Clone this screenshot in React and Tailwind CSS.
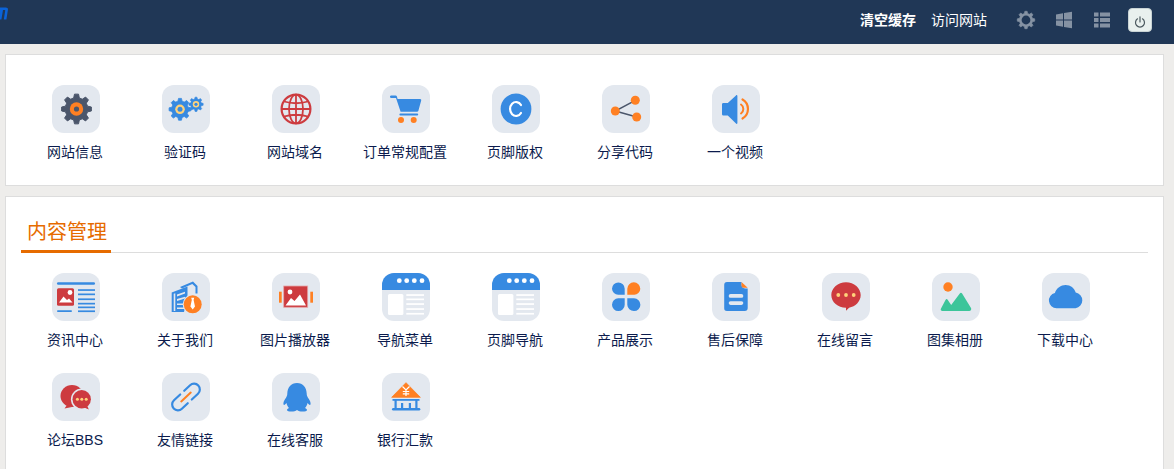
const BLUE = "#378ae1";
const RED = "#cd3b3f";
const ORANGE = "#ff8023";
const SLATE = "#4b566b";
const YELLOW = "#ffd27a";
const TILE = "#e3e8ef";

function gearPath(cx, cy, r, teeth) {
  const inner = r * 0.76;
  const step = (Math.PI * 2) / teeth;
  let d = "";
  for (let i = 0; i < teeth; i++) {
    const a = i * step - Math.PI / 2;
    const pts = [
      [inner, a - step * 0.32],
      [r, a - step * 0.17],
      [r, a + step * 0.17],
      [inner, a + step * 0.32],
    ];
    pts.forEach(([rad, ang], k) => {
      const x = (cx + rad * Math.cos(ang)).toFixed(2);
      const y = (cy + rad * Math.sin(ang)).toFixed(2);
      d += (i === 0 && k === 0 ? "M" : "L") + x + " " + y + " ";
    });
  }
  return d + "Z";
}

const Svg = ({ children }) => (
  <svg viewBox="0 0 48 48" width="48" height="48" className="block">
    {children}
  </svg>
);

const icons = {
  gear: (
    <Svg>
      <path d={gearPath(24.5, 24, 15, 8)} fill={SLATE} stroke={SLATE} strokeWidth="1" strokeLinejoin="round" />
      <circle cx="24.5" cy="24" r="6.7" fill={ORANGE} />
      <circle cx="24.5" cy="24" r="2.6" fill={SLATE} />
    </Svg>
  ),
  gears: (
    <Svg>
      <path d={gearPath(18, 24.3, 11, 8)} fill={BLUE} stroke={BLUE} strokeWidth="0.8" strokeLinejoin="round" />
      <circle cx="18" cy="24.3" r="4.8" fill={YELLOW} />
      <circle cx="18" cy="24.3" r="2.5" fill={BLUE} />
      <path d={gearPath(34, 19.3, 7.2, 8)} fill={BLUE} stroke={BLUE} strokeWidth="0.6" strokeLinejoin="round" />
      <circle cx="34" cy="19.3" r="3.2" fill={YELLOW} />
      <circle cx="34" cy="19.3" r="1.6" fill={BLUE} />
    </Svg>
  ),
  globe: (
    <Svg>
      <g fill="none" stroke={RED} strokeWidth="1.8">
        <circle cx="24" cy="24" r="14.4" strokeWidth="2.2" />
        <ellipse cx="24" cy="24" rx="7" ry="14.4" />
        <path d="M24 9.6V38.4M9.6 24H38.4M12 16.5Q24 20 36 16.5M12 31.5Q24 28 36 31.5" />
      </g>
    </Svg>
  ),
  cart: (
    <Svg>
      <path d="M9 10.5h4.5a1.5 1.5 0 0 1 1.4 1.1L15.6 14H38a1.2 1.2 0 0 1 1.2 1.5L36.4 25.8a1.5 1.5 0 0 1-1.4 1H18.6L14 13H9.5a1.2 1.2 0 0 1-.5-2.5Z" fill={BLUE} />
      <rect x="17.4" y="28.4" width="18.8" height="2.2" rx="1" fill={BLUE} />
      <circle cx="19" cy="35" r="3" fill={ORANGE} />
      <circle cx="31.7" cy="35" r="3" fill={ORANGE} />
    </Svg>
  ),
  copyright: (
    <Svg>
      <circle cx="24" cy="24" r="15.4" fill={BLUE} />
      <path d="M29 20A6 7 0 1 0 29 28" fill="none" stroke="#fff" strokeWidth="2.2" strokeLinecap="round" />
    </Svg>
  ),
  share: (
    <Svg>
      <path d="M33.3 15.3L13.3 26L34.7 32" fill="none" stroke={SLATE} strokeWidth="1.5" />
      <circle cx="33.3" cy="15.3" r="4.5" fill={ORANGE} />
      <circle cx="13.3" cy="26" r="4.5" fill={ORANGE} />
      <circle cx="34.7" cy="32" r="4.5" fill={ORANGE} />
    </Svg>
  ),
  speaker: (
    <Svg>
      <path d="M10 19.5a1.4 1.4 0 0 1 1.4-1.4h4.4L24 10.4c.6-.6 1.4-.2 1.4.6v27c0 .8-.8 1.2-1.4.6l-8.2-8h-4.4a1.4 1.4 0 0 1-1.4-1.4Z" fill={BLUE} />
      <path d="M29 19.5a5.5 5.5 0 0 1 0 9" fill="none" stroke={ORANGE} strokeWidth="2" strokeLinecap="round" />
      <path d="M30.5 14.5a11 11 0 0 1 0 19" fill="none" stroke={ORANGE} strokeWidth="2.2" strokeLinecap="round" />
    </Svg>
  ),
  news: (
    <Svg>
      <rect x="5" y="9.2" width="38" height="2.6" rx="1.2" fill={BLUE} />
      <rect x="5" y="15.3" width="17" height="17.4" rx="1.5" fill={RED} />
      <circle cx="18" cy="19.5" r="2.4" fill="#fff" />
      <path d="M7 29.5l4.5-6 3.5 3.5 2-1.6 3.5 4.1Z" fill="#fff" />
      <rect x="5" y="37.2" width="15" height="1.8" rx="0.9" fill={BLUE} />
      <g fill={BLUE}>
        <rect x="26" y="16.2" width="17" height="1.7" />
        <rect x="26" y="20.5" width="17" height="1.7" />
        <rect x="26" y="25.4" width="17" height="1.7" />
        <rect x="26" y="29.8" width="17" height="1.7" />
        <rect x="26" y="33.5" width="17" height="1.7" />
        <rect x="26" y="37.4" width="17" height="1.7" />
      </g>
    </Svg>
  ),
  about: (
    <Svg>
      <path d="M18 14L31 8.500l4.500 4.500v7.500h-2v-6.500l-3.200-3L20 15.500Z" fill={BLUE} />
      <path d="M9.700 19.500L25.500 13.500V22L22 39H9.700Z" fill={BLUE} />
      <g fill={TILE}>
        <path d="M11.700 20.800L13.300 20.200V38H11.700Z" />
        <path d="M15 21.500L23 18.700V20.500L15 23.500Z" />
        <path d="M15 26L23 23.800V25.500L15 28Z" />
        <path d="M15 30.500H22V32H15Z" />
        <path d="M15 34.500H22V36H15Z" />
      </g>
      <circle cx="30.700" cy="31.300" r="10" fill={TILE} />
      <circle cx="30.700" cy="31.300" r="9" fill={ORANGE} />
      <path d="M29.200 24.800h3l-.6 2.200 1.400 6.600-2.300 3-2.300-3 1.400-6.600Z" fill="#fff" />
    </Svg>
  ),
  player: (
    <Svg>
      <rect x="7" y="18.7" width="2.7" height="11" fill={ORANGE} />
      <rect x="38.3" y="18.7" width="2.7" height="11" fill={ORANGE} />
      <rect x="11.7" y="13" width="24" height="21.3" fill={RED} stroke="#e6a7a8" strokeWidth="0.8" />
      <circle cx="18" cy="19" r="2.4" fill="#fff" />
      <path d="M13.500 32.500l5.500-7.500 3.500 3 5.500-6.500 6 11Z" fill="#fff" />
    </Svg>
  ),
  nav: (
    <Svg>
      <rect x="0" y="0" width="48" height="17" fill={BLUE} />
      <g fill="#fff">
        <circle cx="17.300" cy="7.700" r="2.400" />
        <circle cx="24.700" cy="7.700" r="2.400" />
        <circle cx="32.300" cy="7.700" r="2.400" />
        <circle cx="40" cy="7.700" r="2.400" />
        <rect x="6" y="21" width="15.400" height="21" rx="1.500" />
        <rect x="24.300" y="21.200" width="17.700" height="1.700" />
        <rect x="24.300" y="25.500" width="17.700" height="1.700" />
        <rect x="24.300" y="30.200" width="17.700" height="1.700" />
        <rect x="24.300" y="35.200" width="17.700" height="1.700" />
        <rect x="24.300" y="39.900" width="17.700" height="1.700" />
      </g>
    </Svg>
  ),
  clover: (
    <Svg>
      <path d="M10 15.800a6.300 6.300 0 0 1 12.700 0v5.900H16.300A6.200 6.200 0 0 1 10 15.800Z" fill={BLUE} />
      <path d="M25.300 15.800a6.500 6.500 0 0 1 13 0 6 6 0 0 1-6.300 5.900h-6.700Z" fill={ORANGE} />
      <path d="M10 31.700a6.300 6.300 0 0 1 6.300-6.400h6.400v6.400a6.300 6.300 0 0 1-12.700 0Z" fill={BLUE} />
      <path d="M25.300 25.300h6.700a6.400 6.400 0 0 1 0 12.800 6.600 6.600 0 0 1-6.700-6.400Z" fill={BLUE} />
    </Svg>
  ),
  doc: (
    <Svg>
      <path d="M15 9h14.500v2.500a4 4 0 0 0 3.600 4h2.600V35a3 3 0 0 1-3 3H15a2.800 2.800 0 0 1-2.800-3V12a3 3 0 0 1 2.800-3Z" fill={BLUE} />
      <path d="M29.500 9l6.200 5.700h-4.200a2 2 0 0 1-2-2Z" fill={ORANGE} />
      <rect x="16.700" y="21" width="14.600" height="3.800" rx="1.900" fill={TILE} />
      <rect x="16.700" y="28.300" width="14.600" height="3.600" rx="1.800" fill={TILE} />
    </Svg>
  ),
  message: (
    <Svg>
      <path d="M24 9.200c8.100 0 14.700 5.800 14.700 12.900 0 6.600-5.400 11.600-11.600 12.600L24 37.800v-3C15.900 34.800 9.300 29.200 9.300 22.100S15.900 9.200 24 9.200Z" fill={RED} />
      <circle cx="16.300" cy="22" r="1.900" fill={YELLOW} />
      <circle cx="24" cy="22" r="1.900" fill={YELLOW} />
      <circle cx="31.700" cy="22" r="1.900" fill={YELLOW} />
    </Svg>
  ),
  photo: (
    <Svg>
      <circle cx="16" cy="14" r="4.700" fill={ORANGE} />
      <path d="M9 35.500L13.500 27c.7-1.200 1.600-1.200 2.300 0l3.400 5 8.600-11.500c.7-1 1.600-1 2.300 0L39 35c.7 1.500-.1 3-1.800 3H10.600c-1.600 0-2.400-1-1.600-2.500Z" fill="#3cc59a" />
    </Svg>
  ),
  cloud: (
    <Svg>
      <path d="M14.500 35.200a7.700 7.700 0 0 1-1.600-15.200C14.400 15 18.900 12 23.600 12c4.900 0 8.800 3 10.100 7.600a7.900 7.900 0 0 1-.1 15.600Z" fill={BLUE} />
    </Svg>
  ),
  chat: (
    <Svg>
      <ellipse cx="20" cy="23" rx="11.500" ry="11" fill={RED} />
      <path d="M15 32L12.500 35.500L20 34Z" fill={RED} />
      <circle cx="29.700" cy="26.300" r="10.800" fill={TILE} />
      <circle cx="29.700" cy="26.300" r="9.200" fill={RED} />
      <path d="M31 34L36.800 36.500L34.500 31Z" fill={RED} />
      <circle cx="25.400" cy="26.300" r="1.500" fill={YELLOW} />
      <circle cx="29.800" cy="26.300" r="1.500" fill={YELLOW} />
      <circle cx="34.200" cy="26.300" r="1.500" fill={YELLOW} />
    </Svg>
  ),
  link: (
    <Svg>
      <g transform="translate(24 24) rotate(-43)" fill="none" strokeLinecap="round">
        <path d="M-2.500 -5.800H-11a5.800 5.800 0 0 0 0 11.600H-3" stroke={BLUE} strokeWidth="2.200" />
        <path d="M3 -5.800H11a5.800 5.800 0 0 1 0 11.600H2.500" stroke={BLUE} strokeWidth="2.200" />
        <path d="M-6.500 0H6.500" stroke={ORANGE} strokeWidth="2" />
      </g>
    </Svg>
  ),
  qq: (
    <Svg>
      <path d="M25 10c6 0 9.500 4.500 9.700 10.500 0 2 .6 3.300 1.800 5 1.400 2 2.200 3.700 2.100 5.500-.1 1-.9 1.300-1.600.5l-1.500-1.500c-.4 2.200-1.200 3.800-2.500 5 1.300.6 2 1.300 2 2 0 1.200-2 1.500-4.500 1.500-2.300 0-4-.5-5.500-1.500-1.500 1-3.200 1.500-5.500 1.500-2.500 0-4.500-.3-4.500-1.500 0-.7.700-1.400 2-2-1.300-1.200-2.100-2.800-2.500-5l-1.500 1.500c-.7.800-1.500.5-1.600-.5-.1-1.800.7-3.500 2.100-5.500 1.200-1.700 1.800-3 1.800-5C15.500 14.500 19 10 25 10Z" fill={BLUE} />
    </Svg>
  ),
  bank: (
    <Svg>
      <path d="M24 9.700L38.300 24.300H9.700Z" fill={ORANGE} stroke={ORANGE} strokeWidth="0.8" strokeLinejoin="round" />
      <path d="M20.500 13.500L24 17l3.500-3.500M24 17v6M20.800 18.500h6.400M20.800 20.800h6.400" fill="none" stroke="#fff" strokeWidth="1.200" />
      <g fill={BLUE}>
        <rect x="10.500" y="26" width="27" height="1.800" />
        <rect x="12.500" y="27" width="2.200" height="8" />
        <rect x="19" y="30" width="2.200" height="5" />
        <rect x="26.800" y="30" width="2.200" height="5" />
        <rect x="33.300" y="27" width="2.200" height="8" />
        <rect x="10" y="35" width="28.300" height="2.500" rx="1.200" />
      </g>
    </Svg>
  ),
};

const row1 = [
  ["网站信息", "gear"],
  ["验证码", "gears"],
  ["网站域名", "globe"],
  ["订单常规配置", "cart"],
  ["页脚版权", "copyright"],
  ["分享代码", "share"],
  ["一个视频", "speaker"],
];

const row2 = [
  ["资讯中心", "news"],
  ["关于我们", "about"],
  ["图片播放器", "player"],
  ["导航菜单", "nav"],
  ["页脚导航", "nav"],
  ["产品展示", "clover"],
  ["售后保障", "doc"],
  ["在线留言", "message"],
  ["图集相册", "photo"],
  ["下载中心", "cloud"],
  ["论坛BBS", "chat"],
  ["友情链接", "link"],
  ["在线客服", "qq"],
  ["银行汇款", "bank"],
];

function Item({ label, icon }) {
  return (
    <div className="flex h-[100px] w-[110px] flex-col items-center">
      <div className="h-12 w-12 overflow-hidden rounded-xl bg-[#e3e8ef]">{icons[icon]}</div>
      <div className="mr-[2px] mt-2 whitespace-nowrap text-center text-sm leading-[22px] text-[#0b1b4d]">{label}</div>
    </div>
  );
}

const HeaderIcon = ({ children }) => (
  <svg viewBox="0 0 20 20" width="20" height="20" className="block">
    {children}
  </svg>
);

export default function App() {
  return (
    <div className="h-[469px] overflow-hidden bg-[#eeedeb] [font-family:'Liberation_Sans','Noto_Sans_CJK_SC',sans-serif]">
      <header className="relative flex h-11 items-center justify-end bg-[#203756] pb-1 pr-[22px] text-sm text-white">
        <svg viewBox="0 0 8 14" width="8" height="14" className="absolute left-0 top-[6px]">
          <path d="M0 1.500h5.800c1.700 0 2.400 1 2.100 2.500L6.400 13.500H3.800L5.200 4.800c.1-.5-.1-.7-.6-.7H3L1.400 13.500H0Z" fill="#0b63d8" />
        </svg>
        <span className="font-bold">清空缓存</span>
        <span className="ml-[15px]">访问网站</span>
        <div className="ml-[29px] flex items-center gap-[18px]">
          <HeaderIcon>
            <path d={gearPath(10, 10, 8.800, 8)} fill="#8592a3" stroke="#8592a3" strokeWidth="0.600" strokeLinejoin="round" />
            <circle cx="10" cy="10" r="4.400" fill="#203756" />
          </HeaderIcon>
          <HeaderIcon>
            <path d="M2 4.500l7-1.300v6.300H2ZM10 3l8-1.300v7.800h-8ZM2 10.500h7v6.300l-7-1.300ZM10 10.500h8v7.800L10 17Z" fill="#8592a3" />
          </HeaderIcon>
          <HeaderIcon>
            <g fill="#8592a3">
              <rect x="2" y="2.500" width="4.500" height="4" />
              <rect x="8" y="2.500" width="10" height="4" />
              <rect x="2" y="8" width="4.500" height="4" />
              <rect x="8" y="8" width="10" height="4" />
              <rect x="2" y="13.500" width="4.500" height="4" />
              <rect x="8" y="13.500" width="10" height="4" />
            </g>
          </HeaderIcon>
          <div className="-ml-[2px] flex h-6 w-6 items-center justify-center rounded-sm border border-[#c9d3d4] bg-[#e9f0ee]">
            <svg viewBox="0 0 14 14" width="14" height="14" className="mt-[3px]">
              <path d="M4.500 3.800a4.500 4.500 0 1 0 5 0M7 1.800V7" fill="none" stroke="#4d5a60" strokeWidth="1.200" strokeLinecap="round" />
            </svg>
          </div>
        </div>
      </header>

      <main className="flex flex-col gap-[10px] pb-4 pl-[5px] pr-[10px] pt-[10px]">
        <section className="border border-[#dddddd] bg-white px-[15px] pt-[30px]">
          <div className="flex flex-wrap">
            {row1.map(([label, icon]) => (
              <Item key={label} label={label} icon={icon} />
            ))}
          </div>
        </section>

        <section className="border border-[#dddddd] bg-white px-[15px] pt-5">
          <div className="border-b border-[#dddddd]">
            <div className="-mb-px w-[90px] border-b-[3px] border-[#e66b00] pb-[3px] pl-[2px] text-center text-xl leading-[30px] text-[#e66b00]">
              内容管理
            </div>
          </div>
          <div className="mt-5 flex flex-wrap">
            {row2.map(([label, icon]) => (
              <Item key={label} label={label} icon={icon} />
            ))}
          </div>
        </section>
      </main>
    </div>
  );
}
